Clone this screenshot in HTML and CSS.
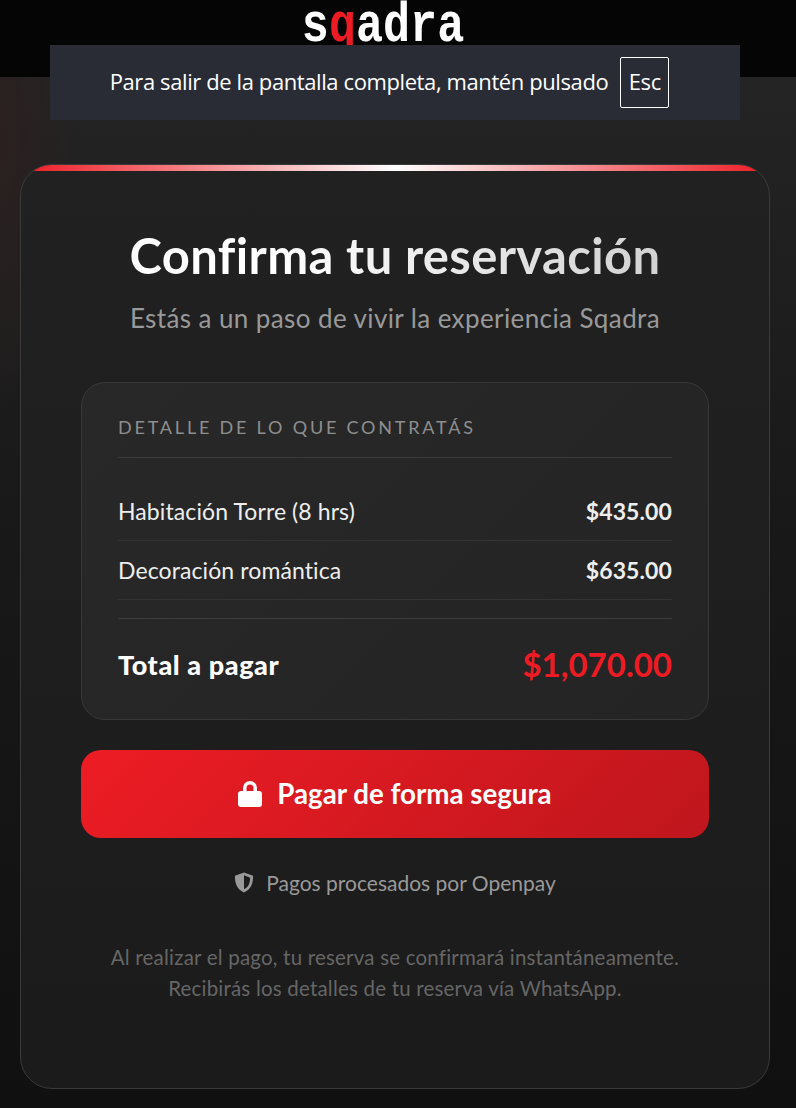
FILE: index.html
```html
<!DOCTYPE html>
<html lang="es">
<head>
    <meta charset="UTF-8">
    <meta name="viewport" content="width=device-width, initial-scale=1.0">
    <title>Sqadra - Confirma tu reservación</title>
    <link rel="stylesheet" href="styles.css">
</head>
<body>
    <header class="topbar">
        <a href="#" class="logo">s<span class="logo-q">q</span>adra</a>
    </header>
    <div class="fs-notice">
        <span class="fs-text">Para salir de la pantalla completa, mantén pulsado</span>
        <kbd class="fs-key">Esc</kbd>
    </div>
    <main class="page">
        <section class="card">
            <h1 class="card-title">Confirma tu reservación</h1>
            <p class="card-sub">Estás a un paso de vivir la experiencia Sqadra</p>
            <div class="detail">
                <h2 class="detail-label">Detalle de lo que contratás</h2>
                <div class="detail-row">
                    <span>Habitación Torre (8 hrs)</span>
                    <strong>$435.00</strong>
                </div>
                <div class="detail-row">
                    <span>Decoración romántica</span>
                    <strong>$635.00</strong>
                </div>
                <div class="detail-total">
                    <span>Total a pagar</span>
                    <strong>$1,070.00</strong>
                </div>
            </div>
            <a href="#" class="btn-pay">
                <svg class="icon-lock" viewBox="0 0 24 26" aria-hidden="true">
                    <path d="M5 11V7a7 7 0 0 1 14 0v4h-3.500V7a3.500 3.500 0 0 0-7 0v4z"/>
                    <rect x="0" y="10" width="24" height="16" rx="3"/>
                </svg>
                <span class="btn-text">Pagar de forma segura</span>
            </a>
            <p class="secure">
                <svg class="icon-shield" viewBox="0 0 20 22" aria-hidden="true">
                    <path d="M10 0.5 19.5 4c0 7.500-1.500 14-9.500 17.500C2 18 .5 11.500.5 4zM10 3.500v14.700c5-2.700 6.300-7 6.500-12.200z" fill-rule="evenodd"/>
                </svg>
                Pagos procesados por Openpay
            </p>
            <p class="note">Al realizar el pago, tu reserva se confirmará instantáneamente.<br>Recibirás los detalles de tu reserva vía WhatsApp.</p>
        </section>
    </main>
</body>
</html>
```

FILE: styles.css
```css
* {
    margin: 0;
    padding: 0;
    box-sizing: border-box;
}
html, body {
    height: 1108px;
    overflow: hidden;
}
body {
    font-family: 'Lato', 'Noto Sans', sans-serif;
    color: #ffffff;
    background: radial-gradient(ellipse 80px 280px at 0 140px, #2b2020 0%, rgba(43, 32, 32, 0) 100%), linear-gradient(180deg, #242424 77px, #191919 500px, #101010 1108px);
    position: relative;
}
.topbar {
    height: 77px;
    background: #050505;
    display: flex;
    justify-content: center;
    overflow: hidden;
}
.logo {
    font-family: 'Liberation Mono', monospace;
    font-weight: 700;
    font-size: 55px;
    line-height: 54px;
    height: 60px;
    margin-right: 30px;
    color: #ffffff;
    text-decoration: none;
    transform: scaleX(0.82);
}
.logo-q {
    color: #ed1c24;
}
.fs-notice {
    position: absolute;
    top: 45px;
    left: 50px;
    width: 690px;
    height: 75px;
    padding-right: 11px;
    background: #292c35;
    display: flex;
    align-items: center;
    justify-content: center;
    gap: 12px;
    font-family: 'Open Sans', sans-serif;
    font-size: 22px;
    letter-spacing: -0.4px;
}
.fs-text {
    padding-bottom: 4px;
}
.fs-key {
    font-family: inherit;
    width: 49px;
    height: 51px;
    padding-bottom: 3px;
    border: 1px solid #ffffff;
    border-radius: 2px;
    display: flex;
    align-items: center;
    justify-content: center;
}
.page {
    padding: 87px 26px 0 20px;
}
.card {
    position: relative;
    height: 925px;
    padding: 60px 60px 0;
    border: 1px solid #3a3a3a;
    border-radius: 32px;
    background: linear-gradient(180deg, #212121 0%, #1b1b1b 100%);
    overflow: hidden;
    text-align: center;
}
.card::before {
    content: '';
    position: absolute;
    top: 0;
    left: 0;
    width: 100%;
    height: 6px;
    background: linear-gradient(90deg, #ed1c24, #ffffff, #ed1c24);
}
.card-title {
    font-size: 49px;
    font-weight: 700;
    letter-spacing: 0.35px;
    line-height: 60px;
    background: linear-gradient(90deg, #ffffff 30%, #cccccc 100%);
    -webkit-background-clip: text;
    background-clip: text;
    color: transparent;
}
.card-sub {
    margin-top: 18px;
    font-size: 26px;
    letter-spacing: 0.4px;
    line-height: 30px;
    color: #999999;
}
.detail {
    margin-top: 49px;
    height: 338px;
    padding: 29px 36px 0;
    border: 1px solid #383838;
    border-radius: 24px;
    background: linear-gradient(135deg, #282828, #242424);
    text-align: left;
}
.detail-label {
    font-size: 18px;
    font-weight: 400;
    line-height: 30px;
    letter-spacing: 2.8px;
    text-transform: uppercase;
    color: #8e8e8e;
    padding-bottom: 15px;
    border-bottom: 1px solid #3a3a3a;
    margin-bottom: 24px;
}
.detail-row {
    display: flex;
    justify-content: space-between;
    align-items: center;
    height: 59px;
    padding-bottom: 1px;
    border-bottom: 1px solid #333333;
    font-size: 23px;
    letter-spacing: 0.1px;
    color: #eeeeee;
}
.detail-row strong {
    font-weight: 700;
}
.detail-total {
    display: flex;
    justify-content: space-between;
    align-items: center;
    margin-top: 18px;
    height: 91px;
    border-top: 1px solid #3d3d3d;
    font-size: 27px;
    letter-spacing: 0.6px;
    font-weight: 900;
}
.detail-total strong {
    font-size: 33px;
    letter-spacing: 0;
    font-weight: 700;
    color: #ed1c24;
}
.btn-pay {
    display: flex;
    align-items: center;
    justify-content: center;
    gap: 15px;
    margin-top: 30px;
    height: 88px;
    border-radius: 20px;
    background: linear-gradient(135deg, #ed1c24 0%, #bf161d 100%);
    color: #ffffff;
    font-size: 27.7px;
    font-weight: 700;
    text-decoration: none;
}
.btn-text {
    padding-bottom: 2px;
}
.icon-lock {
    width: 24px;
    height: 26px;
    fill: #ffffff;
}
.secure {
    display: flex;
    align-items: center;
    justify-content: center;
    gap: 12px;
    margin-top: 32px;
    height: 24px;
    font-size: 21px;
    color: #999999;
}
.icon-shield {
    width: 20px;
    height: 21px;
    fill: #999999;
}
.note {
    margin-top: 48px;
    font-size: 20.5px;
    letter-spacing: 0.2px;
    line-height: 31px;
    color: #666666;
}
```
